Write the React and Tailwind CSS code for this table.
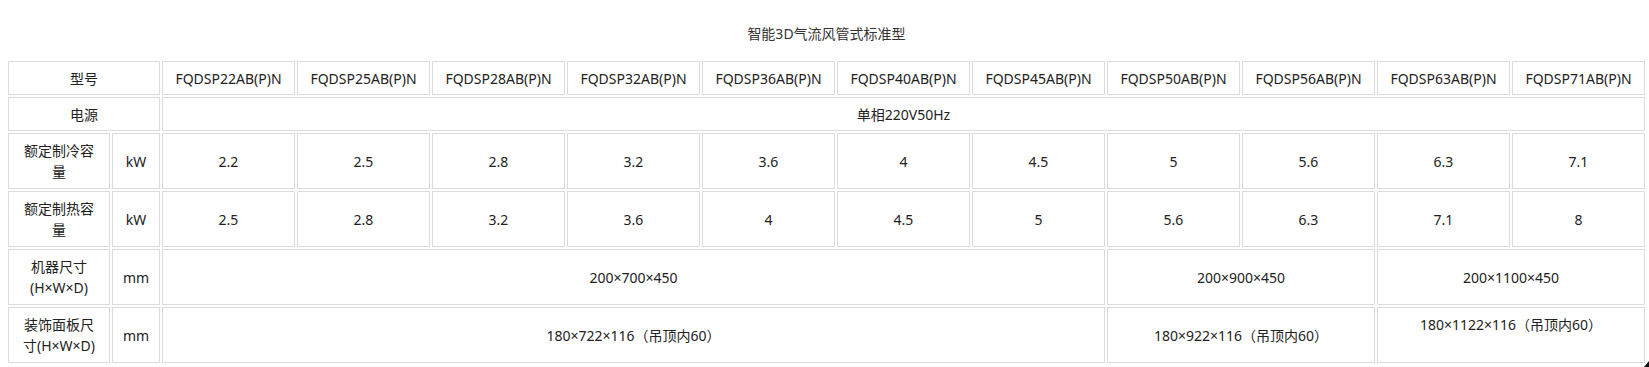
import React from 'react';

const models = ['22', '25', '28', '32', '36', '40', '45', '50', '56', '63', '71'];
const cooling = ['2.2', '2.5', '2.8', '3.2', '3.6', '4', '4.5', '5', '5.6', '6.3', '7.1'];
const heating = ['2.5', '2.8', '3.2', '3.6', '4', '4.5', '5', '5.6', '6.3', '7.1', '8'];

function Cell({ className = '', children }) {
    return (
        <div className={`flex items-center justify-center text-center border border-[#dcdcdc] px-[9px] leading-[21px] ${className}`}>
            <div>{children}</div>
        </div>
    );
}

export default function App() {
    return (
        <div className="bg-white w-[1649px] h-[367px] overflow-hidden relative text-[14px] text-[#222]"
            style={{ fontFamily: '"Noto Sans", "Noto Sans CJK SC", sans-serif' }}>
            {/* title */}
            <div className="w-[1645px] pl-[8px] h-[61px] pt-[23px] leading-[21px] text-center text-[#333]">
                智能3D气流风管式标准型
            </div>

            {/* spec table */}
            <div className="ml-[8px] grid grid-cols-[102px_48px_repeat(11,133px)] grid-rows-[34px_34px_56px_56px_56px_56px] gap-[2px]">
                {/* 型号 */}
                <Cell className="col-span-2">型号</Cell>
                {models.map((m) => (
                    <Cell key={m}>FQDSP{m}AB(P)N</Cell>
                ))}

                {/* 电源 */}
                <Cell className="col-span-2">电源</Cell>
                <Cell className="col-span-11">单相220V50Hz</Cell>

                {/* 制冷 */}
                <Cell>额定制冷容量</Cell>
                <Cell>kW</Cell>
                {cooling.map((v, i) => (
                    <Cell key={'c' + i}>{v}</Cell>
                ))}

                {/* 制热 */}
                <Cell>额定制热容量</Cell>
                <Cell>kW</Cell>
                {heating.map((v, i) => (
                    <Cell key={'h' + i}>{v}</Cell>
                ))}

                {/* 机器尺寸 */}
                <Cell>机器尺寸<br />(H×W×D)</Cell>
                <Cell>mm</Cell>
                <Cell className="col-span-7">200×700×450</Cell>
                <Cell className="col-span-2">200×900×450</Cell>
                <Cell className="col-span-2">200×1100×450</Cell>

                {/* 面板尺寸 */}
                <Cell>装饰面板尺寸(H×W×D)</Cell>
                <Cell>mm</Cell>
                <Cell className="col-span-7">180×722×116（吊顶内60）</Cell>
                <Cell className="col-span-2">180×922×116（吊顶内60）</Cell>
                <Cell className="col-span-2">180×1122×116（吊顶内60）<br />&nbsp;</Cell>
            </div>

            {/* corner mark */}
            <svg className="absolute right-0 bottom-0" width="5" height="6" viewBox="0 0 5 6">
                <polygon points="5,0 5,6 0,6" fill="#111" />
            </svg>
        </div>
    );
}
